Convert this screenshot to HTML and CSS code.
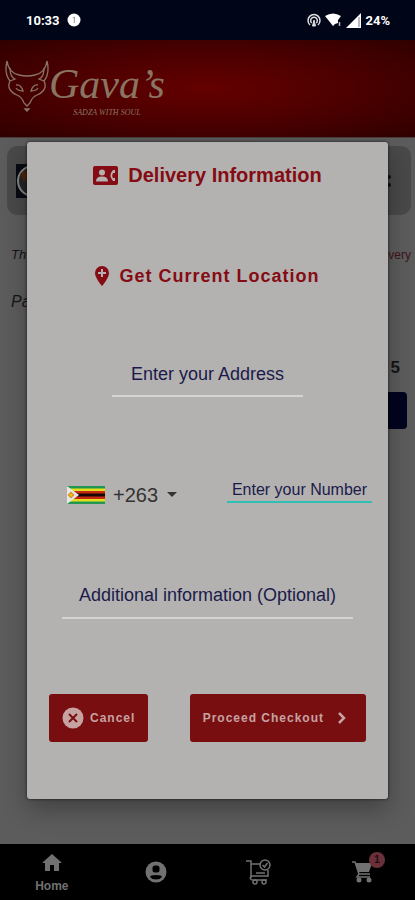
FILE: index.html
```html
<!DOCTYPE html>
<html lang="en">

<head>
  <meta charset="UTF-8" />
  <meta name="viewport" content="width=device-width, initial-scale=1.0" />
  <title>Gava's - Delivery Information</title>
  <link rel="stylesheet" href="styles.css">
</head>

<body>
  <div class="status-bar">
    <span>10:33</span>
    <svg class="notice" width="14" height="14" viewBox="0 0 14 14"><circle cx="7" cy="7" r="6.5" fill="#fff" /><path d="M5.8 5L7.3 4v6" fill="none" stroke="#999" /></svg>
    <div class="status-icons">
      <svg width="14" height="14" viewBox="0 0 14 14" fill="none" stroke="#ddd" stroke-width="1.5">
        <path d="M3 12A6 6 0 1 1 11 12M4.700 10A3.300 3.300 0 1 1 9.300 10" />
        <path d="M5.500 13L7 7l1.500 6z" fill="#ddd" stroke-width="1" />
      </svg>
      <svg width="17" height="14" viewBox="0 0 17 14"><path d="M0 3Q8 -2 16 3L13 7v3l-3 1-2 2z" fill="#fff" /><path d="M14.500 9v4" stroke="#bbb" stroke-width="1.500" /></svg>
      <svg width="15" height="15" viewBox="0 0 15 15"><path d="M0 15L15 0v15z" fill="#fff" /><path d="M13 4v10" stroke="#777" /></svg>
      <span>24%</span>
    </div>
  </div>

  <header class="header">
    <svg class="fox" width="44" height="52" viewBox="0 0 44 52" fill="none" stroke="#8a7462" stroke-width="1.300">
      <path d="M2 1C3 9 8 14 14 15Q22 17 30 15C36 14 41 9 42 1C44 9 43 16 39 21C42 27 39 32 32 35Q27 37 25 43L22 46L19 43Q17 37 12 35C5 32 2 27 5 21C1 16 0 9 2 1z" />
      <path d="M5 8Q5 17 10 19L5 21M39 8Q39 17 34 19L39 21M11 25Q16 24 18 31Q13 31 11 28M33 25Q28 24 26 31Q31 31 33 28" />
      <path d="M20 49h4l-2 2z" fill="#8a7462" />
    </svg>
    <div class="brand">
      <span class="brand-name">Gava’s</span>
      <span class="brand-tagline">SADZA WITH SOUL</span>
    </div>
  </header>

  <main class="cart">
    <div class="cart-item">
      <svg width="34" height="34" viewBox="0 0 34 34"><path d="M0 0h34v34H0z" fill="#080a12" /><circle cx="17" cy="17" r="15" fill="#242424" stroke="#858585" stroke-width="2" /><path d="M4 10l6-4 3 5-5 7z" fill="#4b2410" /></svg>
      <svg width="4" height="14" viewBox="0 0 4 14" fill="#111"><circle cx="2" cy="3" r="2" /><circle cx="2" cy="11" r="2" /></svg>
    </div>
    <div class="cart-note"><span>Th</span><span class="cart-delivery">very</span></div>
    <div class="cart-payment">Pa</div>
    <div class="cart-total">5</div>
    <button class="cart-button" aria-label="Checkout"></button>
  </main>

  <nav class="bottom-nav">
    <a href="#" class="nav-home">
      <svg width="24" height="24" viewBox="0 0 24 24" fill="currentColor"><path d="M10 20v-6h4v6h5v-8h3L12 3 2 12h3v8z" /></svg>
      <span>Home</span>
    </a>
    <a href="#" aria-label="Account">
      <svg width="24" height="24" viewBox="0 0 24 24"><circle cx="12" cy="12" r="10.500" fill="currentColor" /><rect x="8.500" y="5.500" width="7" height="7" rx="2.500" /><path d="M6 17q0-2 6-2t6 2q-2 2.500-6 2.500T6 17z" /></svg>
    </a>
    <a href="#" aria-label="Orders">
      <svg width="26" height="26" viewBox="0 0 26 26" fill="none" stroke="currentColor" stroke-width="1.500">
        <path d="M0 2h5v17M5 5h10M5 17h17v-6M5 17q-2 4 2 4h14M10 14h9" /><circle cx="19" cy="6" r="5" /><path d="M16.500 6l2 2 3-4" /><circle cx="9" cy="23" r="2" /><circle cx="18" cy="23" r="2" />
      </svg>
    </a>
    <a href="#" aria-label="Cart">
      <svg width="22" height="22" viewBox="0 0 22 22"><path d="M3 2h17l-3 9H6z" fill="currentColor" /><path d="M0 1h3l4 12-2 3h13M6 13h12" fill="none" stroke="currentColor" stroke-width="1.500" /><circle cx="7" cy="19" r="2.500" fill="currentColor" /><circle cx="17" cy="19" r="2.500" fill="currentColor" /></svg>
      <span class="badge">1</span>
    </a>
  </nav>

  <form class="dialog" role="dialog" aria-labelledby="dialogTitle">
    <h1 class="dialog-title" id="dialogTitle">
      <svg width="25" height="19" viewBox="0 0 25 19"><rect width="25" height="19" rx="2" fill="currentColor" /><g fill="#b3b2b0"><circle cx="9" cy="6.500" r="3" /><path d="M3 15.500q0-5 6-5t6 5zM22 4h-2q-5 5.500 0 11h2v-3h-2q-1.500-2.500 0-5h2z" /></g></svg>
      Delivery Information
    </h1>

    <button type="button" class="location">
      <svg width="14" height="20" viewBox="0 0 14 20"><path d="M7 0a7 7 0 0 0-7 7c0 5 7 13 7 13s7-8 7-13a7 7 0 0 0-7-7z" fill="currentColor" /><path d="M7 3v8M3 7h8" stroke="#b3b2b0" stroke-width="2" /></svg>
      Get Current Location
    </button>

    <input type="text" class="field address" placeholder="Enter your Address" aria-label="Address" />

    <div class="phone-row">
      <label class="country">
        <svg width="38" height="18" viewBox="0 0 38 18">
          <path d="M0 0h38v18H0z" fill="#249653" /><path d="M0 2.500h38v13H0z" fill="#e4df1c" /><path d="M0 5h38v8H0z" fill="#c52a10" /><path d="M0 7.500h38v3H0z" fill="#180505" />
          <path d="M0 0l12 9L0 18z" fill="#e6e6e6" /><path d="M4 5.500L7.500 9 4 12.500.5 9z" fill="#e08a1c" /><circle cx="4" cy="9" r="1.500" fill="#e4c71c" />
        </svg>
        <select aria-label="Country code">
          <option>+263</option>
        </select>
        <svg width="10" height="6" viewBox="0 0 10 6"><path d="M0 0h10L5 5z" fill="#333" /></svg>
      </label>
      <input type="tel" class="field number" placeholder="Enter your Number" aria-label="Phone number" />
    </div>

    <input type="text" class="field additional" placeholder="Additional information (Optional)" aria-label="Additional information" />

    <div class="actions">
      <button type="button" class="action-button">
        <svg width="22" height="22" viewBox="0 0 22 22"><circle cx="11" cy="11" r="10.500" fill="currentColor" /><path d="M7 7l8 8M15 7l-8 8" stroke="#790e11" stroke-width="2" /></svg>
        Cancel
      </button>
      <button type="submit" class="action-button proceed">
        Proceed Checkout
        <svg width="8" height="12" viewBox="0 0 8 12"><path d="M1 1l5 5-5 5" fill="none" stroke="currentColor" stroke-width="2.500" /></svg>
      </button>
    </div>
  </form>
</body>

</html>
```

FILE: styles.css
```css
* {
  box-sizing: border-box;
}

body {
  margin: 0;
  min-height: 100vh;
  display: flex;
  flex-direction: column;
  position: relative;
  background-color: #5c5c5c;
  font-family: "Liberation Sans", Arial, sans-serif;
}

button,
input,
select {
  font-family: inherit;
}

svg {
  flex-shrink: 0;
}

.status-bar {
  display: flex;
  align-items: center;
  height: 40px;
  padding: 0 25px 0 26px;
  background-color: #000518;
  color: #fff;
  font: bold 13px Roboto, sans-serif;
}

.notice {
  margin-left: 7px;
}

.status-icons {
  display: flex;
  align-items: center;
  gap: 4px;
  margin-left: auto;
}

.header {
  display: flex;
  align-items: flex-start;
  height: 98px;
  padding: 20px 5px 0;
  background: radial-gradient(ellipse at center, #640000 0%, #4c0000 50%, #300000 100%);
  border-bottom: 1px solid #4a3c3c;
  color: #8a7462;
}

.brand {
  display: flex;
  flex-direction: column;
  align-items: center;
  font-family: "Liberation Serif", serif;
  font-style: italic;
}

.brand-name {
  font-size: 42px;
  line-height: 48px;
}

.brand-tagline {
  font-size: 8px;
  line-height: 10px;
}

.cart {
  flex: 1;
  display: flex;
  flex-direction: column;
  padding: 8px 4px 0 7px;
  color: #151515;
}

.cart-item {
  display: flex;
  align-items: center;
  justify-content: space-between;
  height: 69px;
  padding: 0 20px 0 9px;
  background-color: #494949;
  border-radius: 10px;
}

.cart-note {
  display: flex;
  justify-content: space-between;
  margin-top: 32px;
  padding-left: 4px;
  font-size: 13px;
  line-height: 16px;
  font-style: italic;
}

.cart-delivery {
  color: #3c1519;
  font-size: 12px;
  font-style: normal;
}

.cart-payment {
  margin-top: 29px;
  padding-left: 4px;
  font-size: 16px;
  line-height: 20px;
  font-style: italic;
}

.cart-total {
  margin-top: 46px;
  padding-right: 11px;
  font-size: 17px;
  line-height: 20px;
  font-weight: bold;
  text-align: right;
}

.cart-button {
  align-self: flex-end;
  width: 40%;
  height: 37px;
  margin: 14px 4px 0 0;
  background-color: #00041d;
  border: none;
  border-radius: 4px;
}

.bottom-nav {
  display: flex;
  height: 56px;
  background-color: #000;
}

.bottom-nav a {
  flex: 1;
  display: flex;
  flex-direction: column;
  align-items: center;
  justify-content: center;
  position: relative;
  color: #717171;
  font-size: 12px;
  line-height: 14px;
  font-weight: bold;
  text-decoration: none;
}

.nav-home {
  gap: 4px;
}

.badge {
  position: absolute;
  top: 8px;
  left: calc(50% + 6px);
  width: 16px;
  height: 16px;
  border-radius: 50%;
  background-color: #69303a;
  color: #220b10;
  font-size: 10px;
  line-height: 16px;
  text-align: center;
}

.dialog {
  position: absolute;
  top: 142px;
  left: 27px;
  right: 27px;
  display: flex;
  flex-direction: column;
  align-items: center;
  padding: 21px 22px 57px;
  background-color: #b3b2b0;
  border-radius: 3px;
  box-shadow: 0 10px 24px rgba(0, 0, 0, 0.3), 0 0 3px rgba(0, 0, 0, 0.7);
}

.dialog-title {
  display: flex;
  align-items: center;
  gap: 10px;
  margin: 0;
  color: #850b14;
  font-size: 20px;
  line-height: 24px;
}

.location {
  display: flex;
  align-items: center;
  gap: 10px;
  height: 24px;
  margin-top: 77px;
  padding: 0;
  background: none;
  border: none;
  color: #850b14;
  font-size: 18px;
  font-weight: bold;
  letter-spacing: 1px;
}

.field {
  padding: 0;
  background: none;
  border: none;
  border-bottom: 2px solid #d4d4d2;
  border-radius: 0;
  outline: none;
  color: #1b1a4b;
  font-size: 18px;
  text-align: center;
}

.field::placeholder {
  color: #1b1a4b;
  opacity: 1;
}

.address {
  width: 60%;
  height: 44px;
  margin-top: 65px;
}

.phone-row {
  align-self: stretch;
  display: flex;
  justify-content: space-between;
  align-items: flex-start;
  height: 34px;
  margin: 81px -6px 0 18px;
}

.country {
  display: flex;
  align-items: center;
  gap: 8px;
  height: 34px;
}

.country select {
  appearance: none;
  padding: 0;
  background: none;
  border: none;
  color: #333;
  font-size: 20px;
}

.number {
  width: 145px;
  height: 25px;
  border-color: #2fc0b3;
  font-size: 16px;
}

.additional {
  width: 92%;
  height: 46px;
  margin-top: 61px;
}

.actions {
  align-self: stretch;
  display: flex;
  justify-content: space-between;
  margin-top: 75px;
}

.action-button {
  display: flex;
  align-items: center;
  justify-content: center;
  gap: 6px;
  height: 48px;
  padding: 0 13px;
  background-color: #790e11;
  border: none;
  border-radius: 3px;
  color: #c6a3a1;
  font-size: 12px;
  font-weight: bold;
  letter-spacing: 1px;
}

.proceed {
  gap: 14px;
  padding: 0 20px 0 13px;
}
```
